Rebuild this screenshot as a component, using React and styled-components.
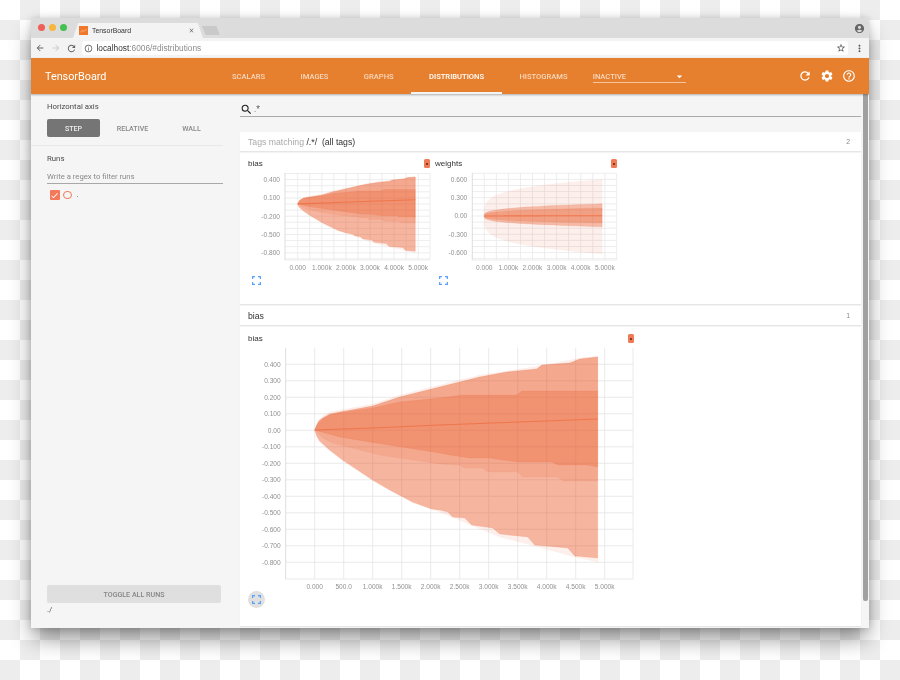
import React from 'react'
import styled, { createGlobalStyle } from 'styled-components'
import {
  MdAccountCircle,
  MdArrowBack,
  MdArrowDropDown,
  MdArrowForward,
  MdCheck,
  MdClose,
  MdHelpOutline,
  MdInfoOutline,
  MdMoreVert,
  MdRefresh,
  MdSearch,
  MdSettings,
  MdStarBorder,
} from 'react-icons/md'

const GlobalStyle = createGlobalStyle`
  html, body {
    margin: 0;
    padding: 0;
    height: 680px;
    overflow: hidden;
    font-family: Roboto, "Liberation Sans", sans-serif;
  }
`

const Desktop = styled.div`
  box-sizing: border-box;
  width: 900px;
  height: 680px;
  padding: 18px 31px 52px;
  background-color: #fff;
  background-image: conic-gradient(#ededed 25%, #fff 25% 50%, #ededed 50% 75%, #fff 75%);
  background-size: 40px 40px;
  filter: blur(0.45px);
`

const Window = styled.div`
  display: flex;
  flex-direction: column;
  height: 610px;
  border-radius: 4px 4px 0 0;
  background: #f5f5f5;
  box-shadow: 0 12px 22px -2px rgba(0, 0, 0, 0.45), 0 0 6px rgba(0, 0, 0, 0.15);
  overflow: hidden;
`

const TitleBar = styled.div`
  display: flex;
  align-items: flex-end;
  flex: 0 0 20px;
  background: #dcdcdc;
  padding-right: 4px;
`

const Lights = styled.div`
  display: flex;
  align-self: center;
  gap: 4px;
  margin: -1px 0 0 7px;
`

const Light = styled.span`
  width: 7px;
  height: 7px;
  border-radius: 50%;
  background: ${(props) => props.color};
`

const BrowserTab = styled.div`
  display: flex;
  align-items: center;
  width: 130px;
  height: 15px;
  margin-left: 6px;
  padding: 0 8px 0 6px;
  box-sizing: border-box;
  background: #f3f3f3;
  clip-path: polygon(0 100%, 4% 0, 96% 0, 100% 100%);
  color: #333;
  font: 6.9px "Liberation Sans", sans-serif;
`

const Favicon = styled.svg`
  width: 9px;
  height: 9px;
  margin-right: 4px;
`

const TabTitle = styled.span`
  flex: 1;
`

const NewTab = styled.div`
  width: 18px;
  height: 9px;
  margin: 0 auto 3px -1px;
  background: #c9c9c9;
  clip-path: polygon(0 0, 80% 0, 100% 100%, 20% 100%);
`

const Account = styled(MdAccountCircle)`
  align-self: center;
  color: #666;
`

const Toolbar = styled.div`
  display: flex;
  align-items: center;
  flex: 0 0 20px;
  background: #f3f3f3;
  padding: 0 4.5px 0 1.5px;
  color: #777;
`

const NavIcon = styled.span`
  display: flex;
  justify-content: center;
  width: 15.5px;
  color: ${(props) => (props.disabled ? '#ccc' : '#666')};
`

const UrlField = styled.div`
  display: flex;
  align-items: center;
  flex: 1;
  height: 14px;
  margin: 0 5.5px 0 3px;
  padding: 0 2px;
  background: #fff;
  border-radius: 2px;
  font: 8.3px "Liberation Sans", sans-serif;
  color: #8c8c8c;
`

const UrlHost = styled.span`
  margin-left: 3.5px;
  color: #333;
`

const UrlRest = styled.span`
  flex: 1;
`

const AppBar = styled.header`
  display: flex;
  align-items: stretch;
  flex: 0 0 36px;
  position: relative;
  z-index: 1;
  background: #e6802f;
  box-shadow: 0 1px 2px rgba(0, 0, 0, 0.3);
  color: #fff;
`

const Brand = styled.div`
  display: flex;
  align-items: center;
  width: 169.3px;
  margin-left: 14px;
  font-size: 10.8px;
`

const NavTab = styled.div`
  display: flex;
  align-items: center;
  padding: 2px 17.7px 0;
  font-size: 7.6px;
  font-weight: 500;
  color: ${(props) => (props.active ? '#fff' : '#f8d8bd')};
  border-bottom: 2px solid ${(props) => (props.active ? '#f3f3f3' : 'transparent')};
`

const RunSelect = styled.div`
  display: flex;
  align-items: center;
  justify-content: space-between;
  width: 93px;
  height: 12px;
  margin: 13px 0 0 7.5px;
  box-sizing: border-box;
  border-bottom: 1px solid #f3c49e;
  font-size: 7.6px;
  font-weight: 500;
  color: #f8d8bd;
`

const AppActions = styled.div`
  display: flex;
  align-items: center;
  gap: 8px;
  margin-left: auto;
  padding-right: 13px;
`

const Body = styled.div`
  display: flex;
  flex: 1;
  min-height: 0;
`

const Sidebar = styled.aside`
  display: flex;
  flex-direction: column;
  flex: 0 0 192px;
  padding-right: 2px;
  background: #f5f5f5;
`

const AxisPanel = styled.div`
  padding: 8px 0 8px 16px;
  border-bottom: 1px solid #e8e8e8;
`

const SideLabel = styled.div`
  font-size: 7.8px;
  line-height: 10px;
  color: #4a4a4a;
`

const AxisButtons = styled.div`
  display: flex;
  margin-top: 7px;
`

const AxisButton = styled.div`
  display: flex;
  align-items: center;
  justify-content: center;
  width: ${(props) => props.width}px;
  height: 18px;
  border-radius: 2px;
  font-size: 7.1px;
  font-weight: 500;
  background: ${(props) => (props.active ? '#757575' : 'transparent')};
  color: ${(props) => (props.active ? '#eee' : '#888')};
`

const RunsPanel = styled.div`
  display: flex;
  flex-direction: column;
  flex: 1;
  padding: 8px 0 13px 16px;
`

const RunFilter = styled.div`
  margin-top: 7px;
  border-bottom: 1px solid #a8a8a8;
  font-size: 7.7px;
  line-height: 12px;
  color: #8a8a8a;
`

const RunRow = styled.div`
  display: flex;
  align-items: center;
  height: 10px;
  margin: 6px 0 0 2.5px;
  font-size: 8px;
  color: #666;
`

const RunCheck = styled.span`
  display: flex;
  align-items: center;
  justify-content: center;
  width: 10px;
  height: 10px;
  border-radius: 1px;
  background: #f4795b;
  color: #fff;
`

const RunDot = styled.span`
  width: 6.5px;
  height: 6.5px;
  margin-left: 3.5px;
  border: 1px solid #f4795b;
  border-radius: 50%;
`

const RunName = styled.span`
  margin: -2px 0 0 5px;
`

const ToggleRuns = styled.div`
  display: flex;
  align-items: center;
  justify-content: center;
  height: 18px;
  margin: auto 2px 0 0;
  border-radius: 2px;
  background: #dfdfdf;
  font-size: 7.1px;
  font-weight: 500;
  color: #858585;
`

const DataDir = styled.div`
  margin-top: 2px;
  font-size: 8px;
  line-height: 10px;
  color: #555;
`

const Main = styled.main`
  display: flex;
  flex-direction: column;
  flex: 1;
  min-width: 0;
  padding-left: 15px;
`

const SearchBar = styled.div`
  display: flex;
  align-items: center;
  gap: 1px;
  height: 14px;
  margin: 6px 0 15px;
  padding-top: 2px;
  border-bottom: 1px solid #aaa;
  font-size: 8.5px;
  color: #666;
`

const SearchIcon = styled(MdSearch)`
  color: #222;
`

const SectionHeader = styled.div`
  display: flex;
  align-items: center;
  justify-content: space-between;
  height: 19px;
  margin-bottom: 2px;
  padding: 0 11px 0 8px;
  background: #fff;
  box-shadow: 0 1px 1px rgba(0, 0, 0, 0.06);
  font: 8.7px "Liberation Sans", sans-serif;
  color: #333;
`

const Muted = styled.span`
  color: #aaa;
`

const Count = styled.span`
  font-size: 6.8px;
  color: #888;
`

const Section = styled.section`
  display: flex;
  flex: ${(props) => (props.grow ? 1 : '0 0 auto')};
  height: ${(props) => (props.grow ? 'auto' : '151px')};
  margin-bottom: 2px;
  padding-top: ${(props) => (props.grow ? 1 : 0)}px;
  background: #fff;
  box-shadow: 0 1px 1px rgba(0, 0, 0, 0.06);
`

const ChartCard = styled.div`
  box-sizing: border-box;
  width: ${(props) => props.width}px;
  padding-left: 8px;
`

const ChartTitleRow = styled.div`
  display: flex;
  align-items: center;
  justify-content: space-between;
  height: 14px;
  margin: 3px ${(props) => -props.overhang}px 0 0;
  font: 8px "Liberation Sans", sans-serif;
  color: #333;
`

const LegendButton = styled.span`
  display: flex;
  align-items: center;
  justify-content: center;
  width: 6px;
  height: 9px;
  border-radius: 1.5px;
  background: #f07a55;
  &::after {
    content: '';
    width: 1.5px;
    height: 1.5px;
    margin-top: 2px;
    background: #7a3a24;
  }
`

const ChartSvg = styled.svg`
  display: block;
`

const AxisText = styled.text`
  font: 6.6px "Liberation Sans", sans-serif;
  fill: #909090;
`

const ExpandButton = styled.span`
  display: flex;
  align-items: center;
  justify-content: center;
  width: 17px;
  height: 17px;
  border-radius: 50%;
  background: ${(props) => (props.active ? '#e0e0e0' : 'transparent')};
`

const ScrollTrack = styled.div`
  flex: 0 0 8px;
  padding: 0 1px 0 2px;
  box-sizing: border-box;
`

const ScrollThumb = styled.div`
  height: 507px;
  border-radius: 0 0 2px 2px;
  background: #a0a0a0;
`

// edges traced in the pixels of the big chart, turned into [step in k, value]
const fromPx = (points) => points.map(([x, y]) => [(x - 315) / 58, (430.3 - y) / 165])

const paleTop = fromPx([[315, 430], [317, 424], [319, 420], [323, 416], [330, 412], [340, 410], [373, 404], [400, 395], [440, 385], [480, 375], [540, 366], [580, 358], [598, 356]])
const biasTop = fromPx([[315, 430], [317, 425], [319, 421], [323, 418], [330, 414], [340, 412], [373, 406], [400, 397], [440, 387], [460, 382], [480, 377], [507, 372], [537, 369], [542, 365], [570, 363], [580, 359], [598, 357]])
const biasInnerTop = fromPx([[315, 430], [317, 426], [319, 423], [323, 419], [330, 415], [340, 413], [373, 408], [400, 402], [440, 398], [463, 395], [517, 395], [522, 391], [598, 391]])
const biasMedian = fromPx([[315, 430], [373, 428], [440, 425], [598, 419]])
const biasInnerLow = fromPx([[315, 430], [340, 437], [370, 442], [440, 453], [450, 455], [470, 458], [490, 458], [503, 460], [520, 462], [553, 462], [558, 465], [587, 465], [598, 467]])
const biasMidLow = fromPx([[315, 430], [323, 438], [333, 443], [380, 455], [427, 462], [440, 464], [460, 465], [465, 468], [483, 468], [488, 472], [518, 472], [523, 477], [558, 477], [564, 481], [598, 481]])
const biasLow = fromPx([[315, 430], [317, 436], [320, 441], [330, 450], [343, 460], [373, 480], [390, 490], [413, 502], [432, 509], [440, 510], [448, 512], [453, 517], [465, 518], [472, 525], [493, 528], [500, 534], [528, 537], [535, 545], [568, 548], [575, 556], [598, 558]])
const paleLow = fromPx([[315, 430], [317, 437], [320, 442], [330, 451], [343, 461], [373, 481], [413, 503], [440, 512], [500, 537], [535, 546], [575, 557], [598, 562]])

const biasBands = [
  { top: paleTop, low: paleLow, opacity: 0.09 },
  { top: biasTop, low: biasLow, opacity: 0.4 },
  { top: biasTop, low: biasMidLow, opacity: 0.15 },
  { top: biasInnerTop, low: biasInnerLow, opacity: 0.29 },
]

// samples bunch up near the start, where the curves are steepest
const curve = (end, power) =>
  Array.from({ length: 31 }, (_, i) => {
    const t = Math.pow(i / 30, 3) * 4.89
    return [t, end * Math.pow(t / 4.89, power)]
  })

const weightBands = [
  { top: curve(0.6, 0.25), low: curve(-0.62, 0.25), opacity: 0.09 },
  { top: curve(0.2, 0.3), low: curve(-0.175, 0.3), opacity: 0.36 },
  { top: curve(0.13, 0.3), low: curve(-0.115, 0.3), opacity: 0.28 },
]
const weightMedian = curve(0.005, 1)

const range = (from, to, step) => {
  const out = []
  for (let v = from; v <= to + 1e-6; v += step) out.push(v)
  return out
}

const Chart = ({ width, height, frame, x0, xStep, y0, yScale, gridX, gridY, gridColor, xTicks, yTicks, bands, median }) => {
  const px = (k) => x0 + k * xStep
  const py = (v) => y0 - v * yScale
  const toPoints = (line) => line.map(([k, v]) => `${px(k).toFixed(1)},${py(v).toFixed(1)}`).join(' ')
  const { left, right, top, bottom } = frame

  return (
    <ChartSvg width={width} height={height}>
      {gridX.map((k) => (
        <line key={k} x1={px(k)} x2={px(k)} y1={top} y2={bottom} stroke={gridColor} strokeWidth="0.8" />
      ))}
      {gridY.map((v) => (
        <line key={v} x1={left} x2={right} y1={py(v)} y2={py(v)} stroke={gridColor} strokeWidth="0.8" />
      ))}
      <line x1={left} x2={left} y1={top} y2={bottom} stroke="#d4d4d4" strokeWidth="0.8" />
      <line x1={right} x2={right} y1={top} y2={bottom} stroke={gridColor} strokeWidth="0.8" />
      <line x1={left} x2={right} y1={bottom} y2={bottom} stroke={gridColor} strokeWidth="0.8" />
      {bands.map((band, i) => (
        <polygon
          key={i}
          points={`${toPoints(band.top)} ${toPoints([...band.low].reverse())}`}
          fill="#ea5c2c"
          fillOpacity={band.opacity}
          stroke="#ea5c2c"
          strokeOpacity={band.opacity * 0.5}
          strokeWidth="0.6"
        />
      ))}
      <polyline points={toPoints(median)} fill="none" stroke="#ee7348" strokeOpacity="0.9" strokeWidth="1.1" />
      {yTicks.map(([v, label]) => (
        <AxisText key={label} x={left - 5} y={py(v) + 2.3} textAnchor="end">
          {label}
        </AxisText>
      ))}
      {xTicks.map(([k, label]) => (
        <AxisText key={label} x={px(k)} y={bottom + 10} textAnchor="middle">
          {label}
        </AxisText>
      ))}
    </ChartSvg>
  )
}

const ExpandIcon = () => (
  <svg width="9" height="9" viewBox="0 0 9 9" fill="none" stroke="#5aa0ff" strokeWidth="1.3">
    <path d="M0.6 3V0.6H3M6 0.6H8.4V3M8.4 6V8.4H6M3 8.4H0.6V6" />
  </svg>
)

const smallXTicks = [0, 1, 2, 3, 4, 5].map((k) => [k, k === 0 ? '0.000' : `${k}.000k`])

const bigXTicks = range(0, 5, 0.5).map((k) => [
  k,
  k === 0 ? '0.000' : k === 0.5 ? '500.0' : `${k.toFixed(1)}00k`,
])

const bigYTicks = range(-8, 4, 1).map((n) => [
  n / 10,
  n === 0 ? '0.00' : `${n < 0 ? '-' : ''}0.${Math.abs(n)}00`,
])

const smallCharts = [
  {
    name: 'bias',
    frame: { left: 37, right: 182, top: 3, bottom: 90 },
    x0: 49.7,
    y0: 34,
    bands: biasBands,
    median: biasMedian,
    gridY: range(-9, 5, 1).map((n) => n / 10),
    yTicks: [[0.4, '0.400'], [0.1, '0.100'], [-0.2, '-0.200'], [-0.5, '-0.500'], [-0.8, '-0.800']],
  },
  {
    name: 'weights',
    frame: { left: 37.3, right: 181.7, top: 3, bottom: 90 },
    x0: 49.3,
    y0: 46,
    bands: weightBands,
    median: weightMedian,
    gridY: range(-7, 7, 1).map((n) => n / 10),
    yTicks: [[0.6, '0.600'], [0.3, '0.300'], [0, '0.00'], [-0.3, '-0.300'], [-0.6, '-0.600']],
  },
]

export default function App() {
  return (
    <Desktop>
      <GlobalStyle />
      <Window>
        <TitleBar>
          <Lights>
            <Light color="#ee5f57" />
            <Light color="#f5b73e" />
            <Light color="#43c14f" />
          </Lights>
          <BrowserTab>
            <Favicon viewBox="0 0 9 9">
              <rect width="9" height="9" fill="#f0782d" />
              <path d="M1.5 6L3.5 4.5L5 5.5L7.5 3" fill="none" stroke="#fbc28f" strokeWidth="0.8" />
            </Favicon>
            <TabTitle>TensorBoard</TabTitle>
            <MdClose size={7} color="#666" />
          </BrowserTab>
          <NewTab />
          <Account size={11} />
        </TitleBar>
        <Toolbar>
          <NavIcon>
            <MdArrowBack size={10} />
          </NavIcon>
          <NavIcon disabled>
            <MdArrowForward size={10} />
          </NavIcon>
          <NavIcon>
            <MdRefresh size={11} />
          </NavIcon>
          <UrlField>
            <MdInfoOutline size={9} color="#555" />
            <UrlHost>localhost</UrlHost>
            <UrlRest>:6006/#distributions</UrlRest>
            <MdStarBorder size={10} color="#555" />
          </UrlField>
          <MdMoreVert size={11} color="#555" />
        </Toolbar>
        <AppBar>
          <Brand>TensorBoard</Brand>
          <NavTab>SCALARS</NavTab>
          <NavTab>IMAGES</NavTab>
          <NavTab>GRAPHS</NavTab>
          <NavTab active>DISTRIBUTIONS</NavTab>
          <NavTab>HISTOGRAMS</NavTab>
          <RunSelect>
            INACTIVE
            <MdArrowDropDown size={13} color="#fff" />
          </RunSelect>
          <AppActions>
            <MdRefresh size={14} />
            <MdSettings size={14} />
            <MdHelpOutline size={14} />
          </AppActions>
        </AppBar>
        <Body>
          <Sidebar>
            <AxisPanel>
              <SideLabel>Horizontal axis</SideLabel>
              <AxisButtons>
                <AxisButton active width={53}>STEP</AxisButton>
                <AxisButton width={65}>RELATIVE</AxisButton>
                <AxisButton width={53}>WALL</AxisButton>
              </AxisButtons>
            </AxisPanel>
            <RunsPanel>
              <SideLabel>Runs</SideLabel>
              <RunFilter>Write a regex to filter runs</RunFilter>
              <RunRow>
                <RunCheck>
                  <MdCheck size={9} />
                </RunCheck>
                <RunDot />
                <RunName>.</RunName>
              </RunRow>
              <ToggleRuns>TOGGLE ALL RUNS</ToggleRuns>
              <DataDir>./</DataDir>
            </RunsPanel>
          </Sidebar>
          <Main>
            <SearchBar>
              <SearchIcon size={13} />
              .*
            </SearchBar>
            <SectionHeader>
              <span>
                <Muted>Tags matching</Muted> /.*/ &nbsp;(all tags)
              </span>
              <Count>2</Count>
            </SectionHeader>
            <Section>
              {smallCharts.map((chart) => (
                <ChartCard key={chart.name} width={187}>
                  <ChartTitleRow overhang={3}>
                    {chart.name}
                    <LegendButton />
                  </ChartTitleRow>
                  <Chart
                    width={184}
                    height={102}
                    frame={chart.frame}
                    x0={chart.x0}
                    xStep={24.1}
                    y0={chart.y0}
                    yScale={61}
                    gridX={range(0, 5, 0.5)}
                    gridY={chart.gridY}
                    gridColor="#e9e9e9"
                    xTicks={smallXTicks}
                    yTicks={chart.yTicks}
                    bands={chart.bands}
                    median={chart.median}
                  />
                  <ExpandButton>
                    <ExpandIcon />
                  </ExpandButton>
                </ChartCard>
              ))}
            </Section>
            <SectionHeader>
              bias
              <Count>1</Count>
            </SectionHeader>
            <Section grow>
              <ChartCard width={394}>
                <ChartTitleRow overhang={0}>
                  bias
                  <LegendButton />
                </ChartTitleRow>
                <Chart
                  width={390}
                  height={246}
                  frame={{ left: 37.7, right: 385, top: 2.7, bottom: 234 }}
                  x0={66.7}
                  xStep={58}
                  y0={85.3}
                  yScale={165}
                  gridX={range(0, 5, 0.5)}
                  gridY={range(-8, 4, 1).map((n) => n / 10)}
                  gridColor="#e5e5e5"
                  xTicks={bigXTicks}
                  yTicks={bigYTicks}
                  bands={biasBands}
                  median={biasMedian}
                />
                <ExpandButton active>
                  <ExpandIcon />
                </ExpandButton>
              </ChartCard>
            </Section>
          </Main>
          <ScrollTrack>
            <ScrollThumb />
          </ScrollTrack>
        </Body>
      </Window>
    </Desktop>
  )
}
